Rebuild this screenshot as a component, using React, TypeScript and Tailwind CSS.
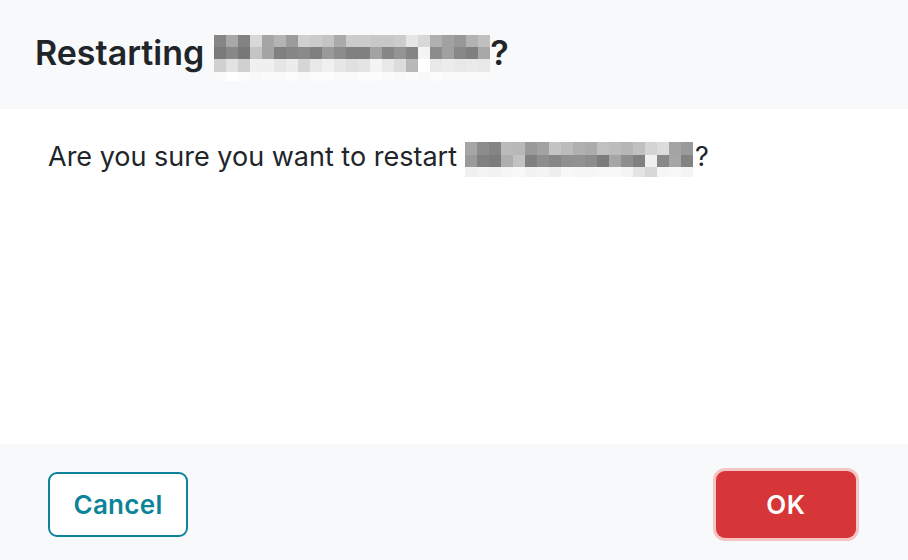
import React from "react"

// blurred (pixelated) names, gray levels per block
const titleBlur = [
  [0x86, 0xa8, 0x82, 0xd8, 0xa6, 0xb4, 0x9c, 0xd0, 0xcc, 0xc4, 0xaa, 0xcc, 0xcc, 0xc8, 0xc8, 0xcc, 0xe6, 0xd8, 0xb0, 0xa2, 0x98, 0xb2, 0xc0],
  [0x7a, 0x88, 0x78, 0xc4, 0xa4, 0x80, 0x86, 0x8a, 0x80, 0x9a, 0x8c, 0x80, 0x80, 0xa2, 0x86, 0x94, 0x84, 0xf4, 0x8c, 0xa0, 0x88, 0x80, 0xa8],
  [0xd0, 0xe2, 0xd0, 0xf0, 0xf0, 0xe6, 0xec, 0xd6, 0xe8, 0xf0, 0xe6, 0xe0, 0xe4, 0xf4, 0xe8, 0xdc, 0xb8, 0xff, 0xe8, 0xec, 0xe8, 0xea, 0xe8],
  [0xfa, 0xff, 0xfc, 0xf8, 0xfa, 0xfa, 0xfc, 0xf8, 0xfc, 0xfc, 0xfa, 0xfa, 0xfc, 0xfc, 0xfa, 0xf8, 0xfa, 0xf8, 0xfc, 0xfa, 0xfa, 0xfa, 0xfa],
]

const bodyBlur = [
  [0xa6, 0x8c, 0x84, 0xba, 0xb8, 0x9a, 0xa2, 0xc4, 0xbc, 0xb0, 0xac, 0xc0, 0xbc, 0xb6, 0xc0, 0xd4, 0xdc, 0xa4, 0x9a],
  [0x9a, 0x80, 0x7c, 0xae, 0xc2, 0x80, 0x8e, 0x86, 0x90, 0x92, 0x8c, 0x7c, 0xa6, 0x8e, 0x80, 0xf0, 0x88, 0xa6, 0x82],
  [0xf0, 0xf4, 0xf2, 0xf6, 0xf8, 0xf2, 0xf4, 0xee, 0xf8, 0xf6, 0xf6, 0xf8, 0xf8, 0xf4, 0xe4, 0xd8, 0xf6, 0xf8, 0xf4],
]

function Mosaic({ rows, cell, rowHeights }: { rows: number[][]; cell: number; rowHeights: number[] }) {
  return (
    <span className="flex flex-col">
      {rows.map((row, r) => (
        <span key={r} className="flex">
          {row.map((v, c) => (
            <span
              key={c}
              style={{ width: cell, height: rowHeights[r], backgroundColor: `rgb(${v},${v},${v})` }}
            />
          ))}
        </span>
      ))}
    </span>
  )
}

export default function App() {
  return (
    <div className="w-[908px] h-[560px] flex flex-col bg-white text-[#212529] font-['Inter',sans-serif]">
      <div className="h-[109px] bg-[#f8f9fa] flex items-center pl-[35px] pb-[5px]">
        <h1 className="text-[34px] font-semibold flex items-center gap-[10px]">
          <span>Restarting</span>
          <span className="flex items-center">
            <span className="mt-[12px]">
              <Mosaic rows={titleBlur} cell={12} rowHeights={[12, 12, 13, 9]} />
            </span>
            <span>?</span>
          </span>
        </h1>
      </div>

      <div className="flex-1 px-[48px] pt-[28px]">
        <p className="text-[27px] leading-[40px] flex items-start gap-[8px]">
          <span>Are you sure you want to restart</span>
          <span className="flex items-start">
            <span className="mt-[5px]">
              <Mosaic rows={bodyBlur} cell={12} rowHeights={[13, 12, 10]} />
            </span>
            <span className="ml-[2px]">?</span>
          </span>
        </p>
      </div>

      <div className="h-[116px] bg-[#f8f9fa] flex items-center justify-between pl-[48px] pr-[52px] pt-[4px]">
        <button className="w-[140px] h-[65px] rounded-[9px] border-2 border-[#0b8499] bg-white text-[#0b8499] text-[26px] font-semibold tracking-[0.3px]">
          Cancel
        </button>
        <button className="w-[140px] h-[67px] rounded-[9px] bg-[#d63638] text-white text-[26px] font-semibold tracking-[0.5px] ring-[3px] ring-[#f5c4c4]">
          OK
        </button>
      </div>
    </div>
  )
}
